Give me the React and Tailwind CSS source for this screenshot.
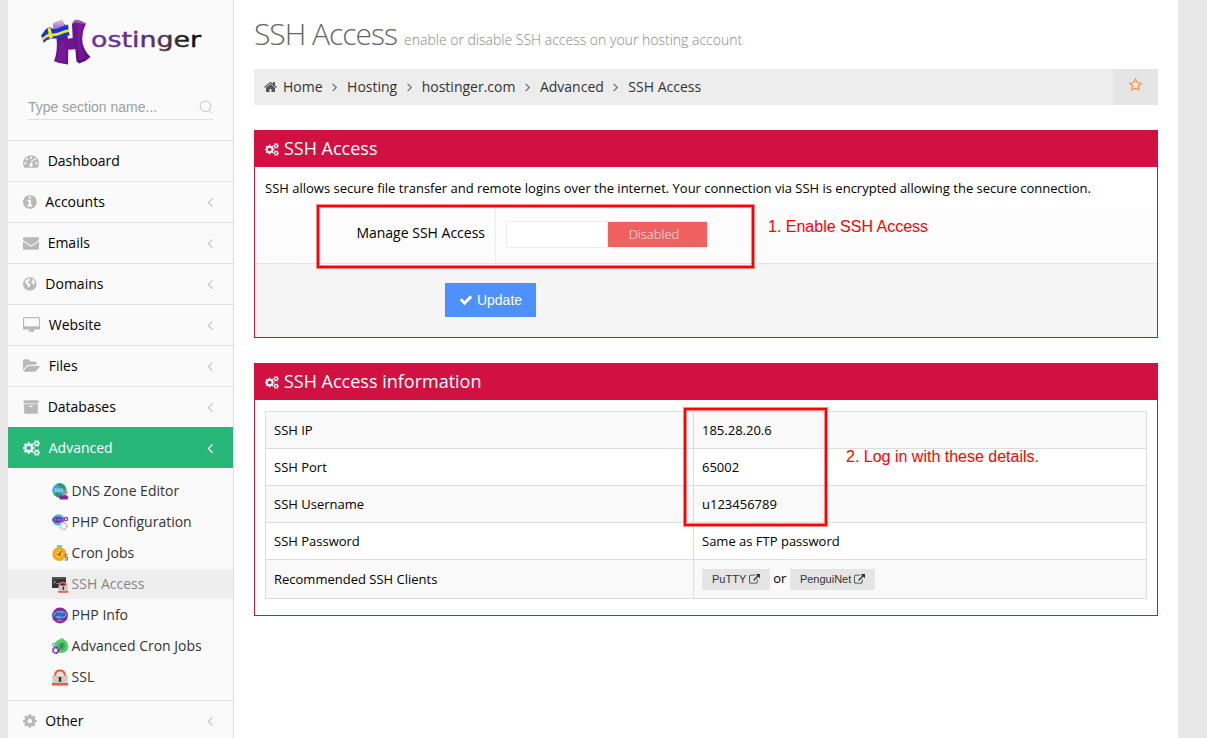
import React from "react";

const COGS =
  "M832 896q0-106-75-181t-181-75-181 75-75 181 75 181 181 75 181-75 75-181zm768 512q0-52-38-90t-90-38-90 38-38 90q0 53 37.5 90.5t90.5 37.5 90.5-37.5 37.5-90.5zm0-1024q0-52-38-90t-90-38-90 38-38 90q0 53 37.5 90.5t90.5 37.5 90.5-37.5 37.5-90.5zm-384 421v185q0 10-7 19.5t-16 10.5l-155 24q-11 35-32 76 34 48 90 115 7 11 7 20 0 12-7 19-23 30-82.5 89.5t-78.5 59.5q-11 0-21-7l-115-90q-37 19-77 31-11 108-23 155-7 24-30 24h-186q-11 0-20-7.5t-10-17.5l-23-153q-34-10-75-31l-118 89q-7 7-20 7-11 0-21-8-144-133-144-160 0-9 7-19 10-14 41-53t47-61q-23-44-35-82l-152-24q-10-1-17-9.5t-7-19.5v-185q0-10 7-19.5t16-10.5l155-24q11-35 32-76-34-48-90-115-7-11-7-20 0-12 7-20 22-30 82-89t79-59q11 0 21 7l115 90q34-18 77-32 11-108 23-154 7-24 30-24h186q11 0 20 7.5t10 17.5l23 153q34 10 75 31l118-89q8-7 20-7 11 0 21 8 144 133 144 160 0 8-7 19-12 16-42 54t-45 60q23 48 34 82l152 23q10 2 17 10.5t7 19.5zm640 533v140q0 16-149 31-12 27-30 52 51 113 51 138 0 4-4 7-122 71-124 71-8 0-46-47t-52-68q-20 2-30 2t-30-2q-14 21-52 68t-46 47q-2 0-124-71-4-3-4-7 0-25 51-138-18-25-30-52-149-15-149-31v-140q0-16 149-31 13-29 30-52-51-113-51-138 0-4 4-7 4-2 35-20t59-34 30-16q8 0 46 46.5t52 67.5q20-2 30-2t30 2q51-71 92-112l6-2q4 0 124 70 4 3 4 7 0 25-51 138 17 23 30 52 149 15 149 31zm0-1024v140q0 16-149 31-12 27-30 52 51 113 51 138 0 4-4 7-122 71-124 71-8 0-46-47t-52-68q-20 2-30 2t-30-2q-14 21-52 68t-46 47q-2 0-124-71-4-3-4-7 0-25 51-138-18-25-30-52-149-15-149-31v-140q0-16 149-31 13-29 30-52-51-113-51-138 0-4 4-7 4-2 35-20t59-34 30-16q8 0 46 46.5t52 67.5q20-2 30-2t30 2q51-71 92-112l6-2q4 0 124 70 4 3 4 7 0 25-51 138 17 23 30 52 149 15 149 31z";

// Each glyph: [left edge, advance width, path] on a 1792-unit em.
const GLYPHS = {
  dashboard: [0, 1792, "M384 1152q0-53-37.5-90.5t-90.5-37.5-90.5 37.5-37.5 90.5 37.5 90.5 90.5 37.5 90.5-37.5 37.5-90.5zm192-448q0-53-37.5-90.5t-90.5-37.5-90.5 37.5-37.5 90.5 37.5 90.5 90.5 37.5 90.5-37.5 37.5-90.5zm428 481l101-382q6-26-7.5-48.5t-38.5-29.5-48 6.5-30 39.5l-101 382q-60 5-107 43.5t-63 98.5q-20 77 20 146t117 89 146-20 89-117q16-60-6-117t-72-91zm660-33q0-53-37.5-90.5t-90.5-37.5-90.5 37.5-37.5 90.5 37.5 90.5 90.5 37.5 90.5-37.5 37.5-90.5zm-640-640q0-53-37.5-90.5t-90.5-37.5-90.5 37.5-37.5 90.5 37.5 90.5 90.5 37.5 90.5-37.5 37.5-90.5zm448 192q0-53-37.5-90.5t-90.5-37.5-90.5 37.5-37.5 90.5 37.5 90.5 90.5 37.5 90.5-37.5 37.5-90.5zm320 448q0 261-141 483-19 29-54 29h-1402q-35 0-54-29-141-221-141-483 0-182 71-348t191-286 286-191 348-71 348 71 286 191 191 286 71 348z"],
  info: [128, 1536, "M1152 1376v-160q0-14-9-23t-23-9h-96v-512q0-14-9-23t-23-9h-320q-14 0-23 9t-9 23v160q0 14 9 23t23 9h96v320h-96q-14 0-23 9t-9 23v160q0 14 9 23t23 9h448q14 0 23-9t9-23zm-128-896v-160q0-14-9-23t-23-9h-192q-14 0-23 9t-9 23v160q0 14 9 23t23 9h192q14 0 23-9t9-23zm640 416q0 209-103 385.5t-279.5 279.5-385.5 103-385.5-103-279.5-279.5-103-385.5 103-385.5 279.5-279.5 385.5-103 385.5 103 279.5 279.5 103 385.5z"],
  envelope: [0, 1792, "M1792 710v794q0 66-47 113t-113 47h-1472q-66 0-113-47t-47-113v-794q44 49 101 87 362 246 497 345 57 42 92.5 65.5t94.5 48 110 24.5h2q51 0 110-24.5t94.5-48 92.5-65.5q170-123 498-345 57-39 100-87zm0-294q0 79-49 151t-122 123q-376 261-468 325-10 7-42.5 31t-54 38.5-52 32.5-57.5 27-50 9h-2q-23 0-50-9t-57.5-27-52-32.5-54-38.5-42.5-31q-91-64-262-182.5t-205-142.5q-62-42-117-115.5t-55-136.5q0-78 41.5-130t118.5-52h1472q65 0 112.5 47t47.5 113z"],
  globe: [128, 1536, "M896 128a768 768 0 1 0 0 1536a768 768 0 1 0 0-1536zM640 330L740 270L840 260L900 330L850 400L920 430L880 520L790 560L740 640L650 660L640 740L740 780L860 880L980 930L950 1060L860 1130L820 1260L760 1360L690 1260L680 1120L580 1000L520 850L400 760L340 640L420 500zM1160 330L1300 430L1430 580L1480 720L1380 760L1400 920L1330 1030L1260 960L1250 830L1120 790L1060 700L1130 600L1210 520L1130 450z"],
  desktop: [-64, 1920, "M1728 992v-832q0-13-9.5-22.5t-22.5-9.5h-1600q-13 0-22.5 9.5t-9.5 22.5v832q0 13 9.5 22.5t22.5 9.5h1600q13 0 22.5-9.5t9.5-22.5zm128-832v1088q0 66-47 113t-113 47h-544q0 37 16 77.5t32 71 16 43.5q0 26-19 45t-45 19h-512q-26 0-45-19t-19-45q0-14 16-44t32-70 16-78h-544q-66 0-113-47t-47-113v-1088q0-66 47-113t113-47h1600q66 0 113 47t47 113z"],
  folder: [-64, 1920, "M1815 952q0 31-31 66l-336 396q-43 51-120.5 86.5t-143.5 35.5h-1088q-34 0-60.5-13t-26.5-43q0-31 31-66l336-396q43-51 120.5-86.5t143.5-35.5h1088q34 0 60.5 13t26.5 43zm-343-344v160h-832q-94 0-197 47.5t-164 119.5l-337 396-5 6q0-4-.5-12.5t-.5-12.5v-960q0-92 66-158t158-66h320q92 0 158 66t66 158v32h544q92 0 158 66t66 158z"],
  archive: [0, 1792, "M1088 832q0-26-19-45t-45-19h-256q-26 0-45 19t-19 45 19 45 45 19h256q26 0 45-19t19-45zm576-192v960q0 26-19 45t-45 19h-1408q-26 0-45-19t-19-45v-960q0-26 19-45t45-19h1408q26 0 45 19t19 45zm64-448v256q0 26-19 45t-45 19h-1536q-26 0-45-19t-19-45v-256q0-26 19-45t45-19h1536q26 0 45 19t19 45z"],
  cogs: [-64, 1920, COGS],
  cog: [128, 1536, "M1152 896q0-106-75-181t-181-75-181 75-75 181 75 181 181 75 181-75 75-181zm512-109v222q0 12-8 23t-20 13l-185 28q-19 54-39 91 35 50 107 138 10 12 10 25t-9 23q-27 37-99 108t-94 71q-12 0-26-9l-138-108q-44 23-91 38-16 136-29 186-7 28-36 28h-222q-14 0-24.5-8.5t-11.5-21.5l-28-184q-49-16-90-37l-141 107q-10 9-25 9-14 0-25-11-126-114-165-168-7-10-7-23 0-12 8-23 15-21 51-66.5t54-70.5q-27-50-41-99l-183-27q-13-2-21-12.5t-8-23.5v-222q0-12 8-23t19-13l186-28q14-46 39-92-40-57-107-138-10-12-10-24 0-10 9-23 26-36 98.5-107.5t94.5-71.5q13 0 26 10l138 107q44-23 91-38 16-136 29-186 7-28 36-28h222q14 0 24.5 8.5t11.5 21.5l28 184q49 16 90 37l142-107q9-9 24-9 13 0 25 10 129 119 165 170 7 8 7 22 0 12-8 23-15 21-51 66.5t-54 70.5q26 50 41 98l183 28q13 2 21 12.5t8 23.5z"],
  home: [64, 1664, "M1472 992v480q0 26-19 45t-45 19h-384v-384h-256v384h-384q-26 0-45-19t-19-45v-480q0-1 .5-3t.5-3l575-474 575 474q1 2 1 6zm223-69l-62 74q-8 9-21 11h-3q-13 0-21-7l-692-577-692 577q-12 8-24 7-13-2-21-11l-62-74q-8-10-7-23.5t11-21.5l719-599q32-26 76-26t76 26l244 204v-195q0-14 9-23t23-9h192q14 0 23 9t9 23v408l219 182q10 8 11 21.5t-7 23.5z"],
  check: [0, 1792, "M1671 566q0 40-28 68l-724 724-136 136q-28 28-68 28t-68-28l-136-136-362-362q-28-28-28-68t28-68l136-136q28-28 68-28t68 28l294 295 656-657q28-28 68-28t68 28l136 136q28 28 28 68z"],
  star: [64, 1664, "M1201 1004l306-297-422-62-189-382-189 382-422 62 306 297-73 421 378-199 377 199zm527-357q0 22-26 48l-363 354 86 500q1 7 1 20 0 50-41 50-19 0-40-12l-449-236-449 236q-22 12-40 12-21 0-31.5-14.5t-10.5-35.5q0-6 2-20l86-500-364-354q-25-27-25-48 0-37 56-46l502-73 225-455q19-41 49-41t49 41l225 455 502 73q56 9 56 46z"],
  external: [0, 1792, "M1408 928v320q0 119-84.5 203.5t-203.5 84.5h-832q-119 0-203.5-84.5t-84.5-203.5v-832q0-119 84.5-203.5t203.5-84.5h704q14 0 23 9t9 23v64q0 14-9 23t-23 9h-704q-66 0-113 47t-47 113v832q0 66 47 113t113 47h832q66 0 113-47t47-113v-320q0-14 9-23t23-9h64q14 0 23 9t9 23zm384-864v512q0 26-19 45t-45 19-45-19l-176-176-652 652q-10 10-23 10t-23-10l-114-114q-10-10-10-23t10-23l652-652-176-176q-19-19-19-45t19-45 45-19h512q26 0 45 19t19 45z"],
  left: [544, 704, "M1203 544q0 13-10 23l-393 393 393 393q10 10 10 23t-10 23l-50 50q-10 10-23 10t-23-10l-466-466q-10-10-10-23t10-23l466-466q10-10 23-10t23 10l50 50q10 10 10 23z"],
  right: [544, 704, "M1171 960q0 13-10 23l-466 466q-10 10-23 10t-23-10l-50-50q-10-10-10-23t10-23l393-393-393-393q-10-10-10-23t10-23l50-50q10-10 23-10t23 10l466 466q10 10 10 23z"],
};

function Icon({ name, size, className = "" }) {
  const [x, w, d] = GLYPHS[name];
  return (
    <svg
      className={`shrink-0 ${className}`}
      width={(size * w) / 1792}
      height={size}
      viewBox={`${x} 0 ${w} 1792`}
      fill="currentColor"
      fillRule={name === "globe" ? "evenodd" : "nonzero"}
      aria-hidden="true"
    >
      <path d={d} />
    </svg>
  );
}

function Logo() {
  return (
    <svg className="block" width="164" height="50" viewBox="0 0 164 50" aria-label="Hostinger">
      <defs>
        <linearGradient id="word" x1="51" x2="160" y1="0" y2="0" gradientUnits="userSpaceOnUse">
          <stop offset="0" stopColor="#6b35a0" />
          <stop offset="0.45" stopColor="#5f2c84" />
          <stop offset="0.65" stopColor="#5a3352" />
          <stop offset="0.82" stopColor="#2a2628" />
          <stop offset="1" stopColor="#050505" />
        </linearGradient>
        <linearGradient id="h" x1="0" x2="1" y1="0" y2="1">
          <stop offset="0" stopColor="#5d1580" />
          <stop offset="0.5" stopColor="#6f1690" />
          <stop offset="1" stopColor="#560c76" />
        </linearGradient>
        <linearGradient id="cap" x1="0" x2="0" y1="0" y2="1">
          <stop offset="0" stopColor="#d9c3e4" />
          <stop offset="1" stopColor="#9560b4" />
        </linearGradient>
      </defs>
      <path
        d="M12 7L24 6L27 20.700L31.700 20L31 6.500Q32 2.500 35.500 1.700Q41 3 45 5.500Q40 16 41.700 25.700Q44 34 49.500 39Q45 43.500 38.300 45.500L35.500 43.500L34.300 31.300L27.300 31.800L27 46.500Q19 46 13 43.300Q17 33 15.500 20z"
        fill="url(#h)"
      />
      <path d="M31 6.500Q32 2.500 35.500 1.700L45 5.500Q41 6.500 39.500 5.500L34 4.500z" fill="#a777bd" opacity=".75" />
      <path d="M34.500 5Q40 5 43 6Q38 17 39.500 26Q41 35 46 39Q42 41 38.500 42Q36 22 37 14Q36 8 34.500 5z" fill="#861ea5" opacity=".55" />
      <path d="M18 22Q20 33 16 42Q20 44 24 44L24 24z" fill="#861ea5" opacity=".4" />
      <path d="M11.500 5.700Q16 2.500 21.700 1.800L24 8L13 12z" fill="url(#cap)" />
      <path d="M0 17.500Q3 14 4 12Q6 9.500 8.500 9.300Q12 11.500 15.500 11Q21 8 27 6.500Q27.500 12 28.500 17.500Q21 18.500 15.500 20.500Q10 20 6 22L2.500 25Q2.500 21 0 17.500z" fill="#1437dc" />
      <path d="M1 20Q5 16.500 9 15Q14 16.500 20 13.500Q24 11.500 28 11.200L28 14Q23 14.500 19 16.800Q13 19 9.500 18Q5 19 2 22.500z" fill="#f7e51c" />
      <path d="M6.500 10L9.500 10L12 20L8.500 21z" fill="#f7e51c" />
      <text
        x="50"
        y="29"
        fontFamily="DejaVu Sans, sans-serif"
        fontSize="22"
        textLength="110"
        lengthAdjust="spacingAndGlyphs"
        fill="url(#word)"
        stroke="url(#word)"
        strokeWidth=".4"
      >
        ostinger
      </text>
    </svg>
  );
}

function SubIcon({ kind }) {
  return (
    <svg className="block shrink-0" width="17" height="17" viewBox="0 0 17 17" aria-hidden="true">
      {kind === "dns" && (
        <>
          <circle cx="7.5" cy="7.5" r="7.2" fill="#3ba9d8" />
          <path d="M5 1Q9-1 12.500 2.500L14 6L11 6.500L7 4zM3 9.500L8 10L10 12L8 15Q4 14 3 12z" fill="#2f9a57" />
          <path d="M3 9V5.500q2.200 0 2.200 1.700T3 9M6.200 9V5.500L8 9V5.500M11 5.800H9.500V7.200H11V8.800H9.300" fill="none" stroke="#bfe3ee" strokeWidth=".7" />
          <path d="M10 12L14.500 8L16 9.500L12 13z" fill="#e28b3c" />
          <path d="M7 14Q8 12 11 12.500L14 12L16.500 14L15.500 16.500H8z" fill="#7c2b9e" />
        </>
      )}
      {kind === "php" && (
        <>
          <ellipse cx="6.500" cy="6" rx="6.200" ry="5.800" fill="#4fb0e4" />
          <ellipse cx="6" cy="5.800" rx="5.800" ry="3" fill="#6a3aa5" />
          <path d="M2.500 7.500V5H4V6H2.500M6 3.800V7M6 5.200H7.500V7M9.200 7.500V5H10.500V6H9.200" fill="none" stroke="#9d80cc" strokeWidth=".6" />
          <circle cx="14" cy="5" r="1.600" fill="none" stroke="#8e3bb5" strokeWidth="1.400" />
          <circle cx="11.500" cy="12" r="3.300" fill="#f7f7f7" stroke="#c6c6cc" strokeWidth="2" strokeDasharray="1.900 .7" />
        </>
      )}
      {kind === "cron" && (
        <>
          <path d="M5 .3h5v2H5z" fill="#58b8d4" />
          <circle cx="7.300" cy="9" r="7" fill="#f5a81c" />
          <circle cx="7.300" cy="9" r="5" fill="#fbb829" stroke="#e39a1c" strokeWidth=".7" />
          <path d="M9.500 6L7.300 9.300L5.500 9.500M7.300 9.300L8.500 11" fill="none" stroke="#7b5312" strokeWidth="1.100" />
          <path d="M15.500 9.500H13.500V12H15.300V15H12.800" fill="none" stroke="#6f655e" strokeWidth="1.100" />
        </>
      )}
      {kind === "ssh" && (
        <>
          <rect x="0" y="1" width="14" height="11" fill="#323238" />
          <path d="M0 1h14v2H0z" fill="#555" />
          <path d="M1.500 4.500L3.500 6L1.500 7.500M4.500 7.500H7" fill="none" stroke="#bbb" strokeWidth=".8" />
          <path d="M7.500 10V9Q8 6.500 10.800 6.500T14.200 9V10" fill="none" stroke="#ef6d52" strokeWidth="1.700" />
          <rect x="6.500" y="9.500" width="9.500" height="6" fill="#d2c9c6" />
          <rect x="6" y="15" width="10.300" height="1.800" fill="#ef6345" />
          <rect x="10.600" y="10.500" width="1.500" height="3.500" fill="#333" />
        </>
      )}
      {kind === "info" && (
        <>
          <circle cx="8" cy="8.500" r="7.900" fill="#85299c" />
          <ellipse cx="8" cy="7.700" rx="6.600" ry="4" fill="#4fa3e0" />
          <path d="M3.200 10.500L4 6.500H6L5.500 8.500H3.800M7.500 5L6.800 9M7.200 6.800H9L8.600 9M9.800 10.500L10.600 6.500H12.600L12.200 8.500H10.300" fill="none" stroke="#3a2f84" strokeWidth=".8" />
          <path d="M5.500 13.600H10.500" stroke="#c689d5" strokeWidth="1.300" strokeDasharray="1.200 .4" />
        </>
      )}
      {kind === "adv" && (
        <>
          <path d="M8 0h4v2H8z" fill="#cfc7bd" />
          <circle cx="9.300" cy="8.200" r="6.900" fill="#49c862" />
          <circle cx="9.500" cy="8.200" r="4.700" fill="#39b357" stroke="#7fdd8c" strokeWidth=".8" />
          <path d="M11.500 5.500L9 8.500L10.500 10" fill="none" stroke="#23733a" strokeWidth="1.100" />
          <circle cx="2.300" cy="6.700" r="1.600" fill="none" stroke="#56b6da" strokeWidth="1.300" />
          <circle cx="3.700" cy="12.300" r="2.700" fill="#fff" stroke="#7a2b9d" strokeWidth="2" strokeDasharray="1.700 .4" />
        </>
      )}
      {kind === "ssl" && (
        <>
          <path d="M.3 6H15.700V14H.3z" fill="#cfcbc8" />
          <path d="M4.200 7Q4.500 2 8 2T11.800 7z" fill="#e4e0de" />
          <path d="M3 6.500Q3.500 1.500 8 1.500T13 6.500" fill="none" stroke="#f2583a" strokeWidth="2.100" />
          <rect x="0" y="14" width="16" height="2.500" fill="#f2583a" />
          <path d="M8 7.800a1.600 1.600 0 0 1 1 2.700L9.500 12.800h-3L7 10.500A1.600 1.600 0 0 1 8 7.800z" fill="#333" />
        </>
      )}
    </svg>
  );
}

const MENU = [
  ["dashboard", "Dashboard"],
  ["info", "Accounts"],
  ["envelope", "Emails"],
  ["globe", "Domains"],
  ["desktop", "Website"],
  ["folder", "Files"],
  ["archive", "Databases"],
];

const SUBMENU = [
  ["dns", "DNS Zone Editor"],
  ["php", "PHP Configuration"],
  ["cron", "Cron Jobs"],
  ["ssh", "SSH Access"],
  ["info", "PHP Info"],
  ["adv", "Advanced Cron Jobs"],
  ["ssl", "SSL"],
];

function MenuItem({ icon, label, active }) {
  return (
    <li
      className={`flex h-[41px] items-center border-t pl-[15px] pr-[20px] text-sm ${
        active ? "border-[#28b779] bg-[#28b779] text-white" : "border-[#e1e1e1] text-black"
      }`}
    >
      <Icon name={icon} size={16} className={`-mt-px mr-[8.64px] ${active ? "text-white" : "text-[#b9b9b9]"}`} />
      <span className="flex-1">{label}</span>
      {label !== "Dashboard" && (
        <Icon name="left" size={16} className={active ? "text-white" : "text-[#c6c6c6]"} />
      )}
    </li>
  );
}

function Sidebar() {
  return (
    <aside className="w-[226px] shrink-0 border-r border-[#dedede] bg-[#fafafa]">
      <div className="pl-[33px] pt-[18px]">
        <Logo />
      </div>
      <div className="ml-5 mr-5 mt-[26px] flex h-[26px] items-center justify-between border-b border-[#dedede] font-['Liberation_Sans',sans-serif] text-sm text-[#a0a0a0]">
        <span>Type section name...</span>
        <svg width="14" height="14" viewBox="0 0 14 14" fill="none" stroke="#c4c4c4" strokeWidth="1" aria-hidden="true">
          <circle cx="6.500" cy="6.300" r="5.300" />
          <path d="M10.300 10.200L12.500 13.300" />
        </svg>
      </div>
      <ul className="mt-5">
        {MENU.map(([icon, label]) => (
          <MenuItem key={label} icon={icon} label={label} />
        ))}
        <MenuItem icon="cogs" label="Advanced" active />
        <li>
          <ul className="flex flex-col gap-px py-2">
            {SUBMENU.map(([kind, label]) => (
              <li
                key={label}
                className={`flex h-[30px] items-center gap-[2.600px] pl-[44px] text-sm ${
                  label === "SSH Access" ? "bg-[#eeeeee] text-[#868686]" : "text-[#333333]"
                }`}
              >
                <SubIcon kind={kind} />
                <span>{label}</span>
              </li>
            ))}
          </ul>
        </li>
        <MenuItem icon="cog" label="Other" />
      </ul>
    </aside>
  );
}

function Panel({ title, className, children }) {
  return (
    <section className={`border border-[#c41543] bg-white ${className}`}>
      <h3 className="-m-px mb-0 flex h-[37px] items-center gap-[5px] bg-[#d11141] pb-[2px] pl-[11px] text-lg font-normal text-white">
        <Icon name="cogs" size={13} className="mt-1" />
        <span>{title}</span>
      </h3>
      {children}
    </section>
  );
}

function ClientLink({ children }) {
  return (
    <a className="flex h-[21px] items-center gap-[3px] bg-[#e5e5e5] pl-[10px] pr-[9.500px] font-['Liberation_Sans',sans-serif] text-[11px] text-[#333333]">
      {children}
      <Icon name="external" size={11} />
    </a>
  );
}

const ROWS = [
  ["SSH IP", "185.28.20.6"],
  ["SSH Port", "65002"],
  ["SSH Username", "u123456789"],
  ["SSH Password", "Same as FTP password"],
];

const CRUMBS = ["Home", "Hosting", "hostinger.com", "Advanced", "SSH Access"];

export default function App() {
  return (
    <div className="relative flex h-[738px] w-[1207px] overflow-hidden bg-[#e7e7e7] pl-2 font-['Open_Sans',sans-serif] text-[13px] text-black">
      <Sidebar />
      <main className="h-full w-[944px] shrink-0 bg-white px-5">
        <h1 className="flex h-[69px] items-baseline gap-[7px] pt-[11px] text-[30px] font-light tracking-[-1px] text-[#666666]">
          SSH Access
          <small className="text-sm font-light tracking-normal text-[#888888]">
            enable or disable SSH access on your hosting account
          </small>
        </h1>

        <nav className="flex h-9 items-center bg-[#ededed] pl-[10px] text-sm text-[#333333]">
          <Icon name="home" size={14} className="mr-[6px] text-[#555555]" />
          {CRUMBS.map((crumb, i) => (
            <React.Fragment key={crumb}>
              {i > 0 && <Icon name="right" size={14} className="ml-[9.400px] mr-[9.600px] text-[#666666]" />}
              <span>{crumb}</span>
            </React.Fragment>
          ))}
          <div className="ml-auto flex h-9 w-[45px] items-center justify-center bg-[#e5e5e5] pb-1 text-[#f58a2c]">
            <Icon name="star" size={14} />
          </div>
        </nav>

        <Panel title="SSH Access" className="mt-[25px] h-[208px]">
          <p className="flex h-[41px] items-center pl-[10px] pt-[2px]">
            SSH allows secure file transfer and remote logins over the internet. Your connection via SSH is encrypted
            allowing the secure connection.
          </p>
          <div className="flex h-[56px] border-b border-[#e5e5e5] bg-[#fcfcfc]">
            <div className="w-[241px] border-r border-[#eeeeee] pr-[10px] pt-[15px] text-right text-sm">
              Manage SSH Access
            </div>
            <div className="pl-[10px] pt-[13px]">
              <div className="flex h-[27px] w-[202px] border border-[#eeeeee] bg-white">
                <div className="w-[101px] border-r border-[#eeeeee]" />
                <div className="flex flex-1 items-center justify-center bg-[#ef605e] pr-[7px] text-[13px] font-light text-white/90">
                  Disabled
                </div>
              </div>
            </div>
          </div>
          <div className="h-[73px] bg-[#f5f5f5] pl-[190px] pt-[19px]">
            <button className="flex h-[34px] w-[91px] items-center justify-center gap-[4px] bg-[#4d90fe] font-['Liberation_Sans',sans-serif] text-sm text-white">
              <Icon name="check" size={14} />
              Update
            </button>
          </div>
        </Panel>

        <Panel title="SSH Access information" className="mt-[25px] h-[253px]">
          <div className="mx-[10px] mt-[11px] border-x border-t border-[#dddddd]">
            {ROWS.map(([name, value], i) => (
              <div
                key={name}
                className={`flex h-[37px] items-center border-b border-[#dddddd] ${i % 2 === 0 ? "bg-[#f9f9f9]" : "bg-white"}`}
              >
                <div className="flex h-full w-[428px] items-center border-r border-[#dddddd] pl-2 pt-[2px]">{name}</div>
                <div className="pl-2 pt-[2px]">{value}</div>
              </div>
            ))}
            <div className="flex h-[39px] items-center border-b border-[#dddddd] bg-[#f9f9f9]">
              <div className="flex h-full w-[428px] items-center border-r border-[#dddddd] pl-2 pt-[2px]">
                Recommended SSH Clients
              </div>
              <div className="flex items-center gap-[3.500px] pl-2">
                <ClientLink>PuTTY</ClientLink>
                <span>or</span>
                <ClientLink>PenguiNet</ClientLink>
              </div>
            </div>
          </div>
        </Panel>
      </main>

      {/* Tutorial callouts laid over the page */}
      <div className="absolute left-[317px] top-[205px] h-[63px] w-[437px] border-2 border-[#ff0000] shadow-[0_0_0_1px_rgba(255,0,0,0.45),inset_0_0_0_1px_rgba(255,0,0,0.45)]" />
      <div className="absolute left-[768px] top-[215px] font-['Liberation_Sans',sans-serif] text-base text-[#ff0000]">
        1. Enable SSH Access
      </div>
      <div className="absolute left-[684px] top-[408px] h-[118px] w-[143px] border-2 border-[#ff0000] shadow-[0_0_0_1px_rgba(255,0,0,0.45),inset_0_0_0_1px_rgba(255,0,0,0.45)]" />
      <div className="absolute left-[846px] top-[445px] font-['Liberation_Sans',sans-serif] text-base text-[#ff0000]">
        2. Log in with these details.
      </div>
    </div>
  );
}
